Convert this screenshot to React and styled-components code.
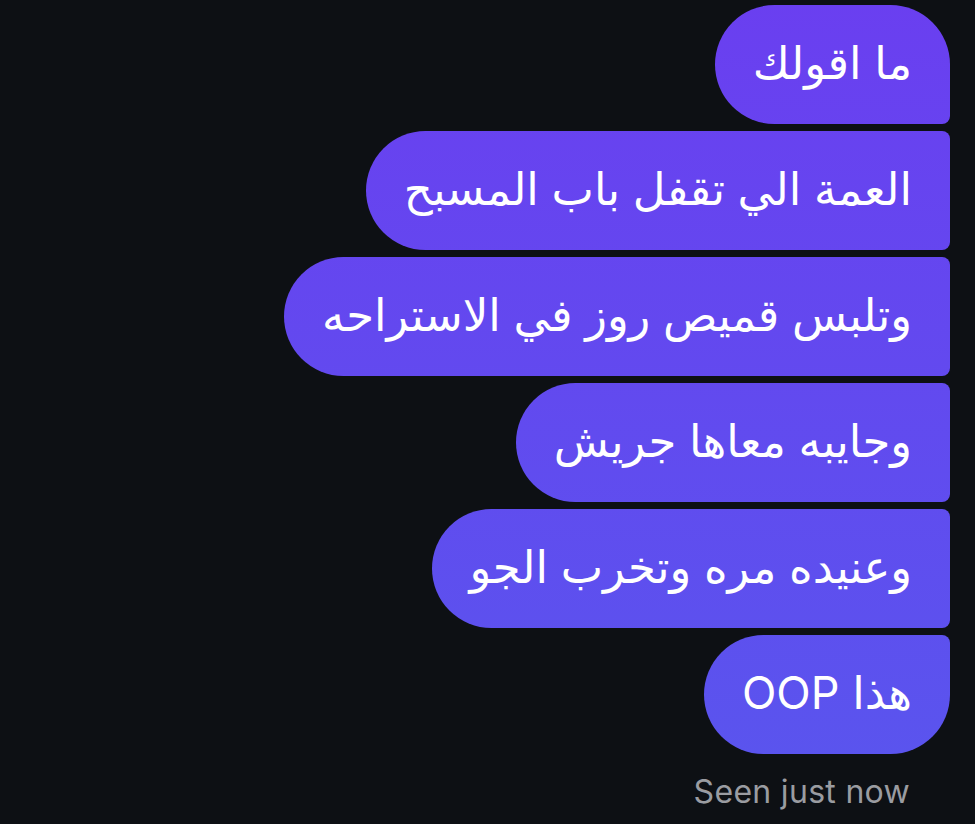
import React from 'react'
import styled, { createGlobalStyle } from 'styled-components';

const Global = createGlobalStyle`
  html, body {
    margin: 0;
    padding: 0;
    background: #0d1014;
  }
`;

const mensajes = [
  'ما اقولك',
  'العمة الي تقفل باب المسبح',
  'وتلبس قميص روز في الاستراحه',
  'وجايبه معاها جريش',
  'وعنيده مره وتخرب الجو',
  'هذا OOP',
];

function App() {
  return (
    <>
      <Global />
      <Chat>
        <Grupo>
          {mensajes.map((texto, i) => (
            <Burbuja
              key={i}
              $primera={i === 0}
              $ultima={i === mensajes.length - 1}
            >
              {texto}
            </Burbuja>
          ))}
        </Grupo>
        <Visto>Seen just now</Visto>
      </Chat>
    </>
  )
}

const Chat = styled.div`
  width: 975px;
  height: 824px;
  box-sizing: border-box;
  padding: 5px 25px 0 0;
  background: #0d1014;
  display: flex;
  flex-direction: column;
  align-items: flex-end;
  overflow: hidden;
`;

const Grupo = styled.div`
  display: flex;
  flex-direction: column;
  align-items: flex-end;
  gap: 7px;
`;

const Burbuja = styled.div`
  direction: rtl;
  height: 119px;
  box-sizing: border-box;
  padding: 0 38px 4px;
  display: flex;
  align-items: center;
  color: #ffffff;
  font-family: "Inter", "DejaVu Sans", sans-serif;
  font-size: 45px;
  white-space: nowrap;
  background: linear-gradient(180deg, #6a3ff0 0px, #5a54ee 760px);
  background-attachment: fixed;
  border-top-left-radius: 60px;
  border-bottom-left-radius: 60px;
  border-top-right-radius: ${p => p.$primera ? '60px' : '8px'};
  border-bottom-right-radius: ${p => p.$ultima ? '60px' : '8px'};
`;

const Visto = styled.div`
  margin-top: 18px;
  margin-right: 40px;
  font-family: "Inter", sans-serif;
  font-size: 32px;
  letter-spacing: 0.3px;
  color: #9a9ca1;
`;

export default App
